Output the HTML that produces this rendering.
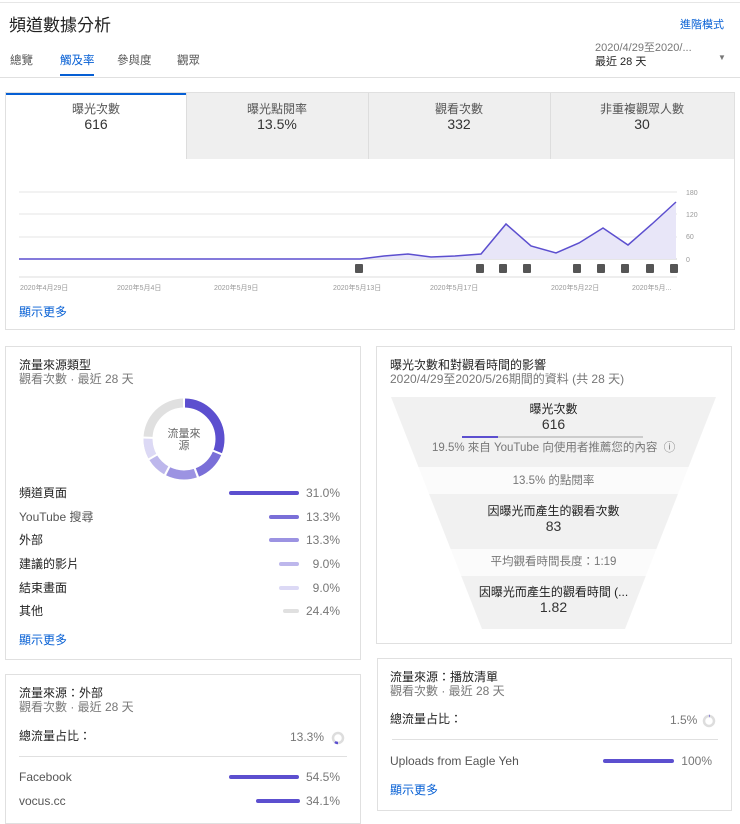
<!DOCTYPE html>
<html><head><meta charset="utf-8"><style>
*{box-sizing:border-box;margin:0;padding:0}
body{width:740px;height:814px;overflow:hidden;background:#fff;font-family:"Liberation Sans","Noto Sans CJK TC",sans-serif;color:#222;position:relative;font-size:12px;line-height:15px}
.a{position:absolute;white-space:nowrap}
.card{position:absolute;border:1px solid #e0e0e0;background:#fff}
.g{color:#777}
.blue{color:#065fd4}
.bar{position:absolute;height:4px;border-radius:2px}
.r{text-align:right}
</style></head><body>
<div class="a" style="left:0;top:2px;width:740px;height:1px;background:#e6e6e6"></div>
<div class="a" style="left:9px;top:15px;font-size:17px;line-height:22px;color:#222">頻道數據分析</div>
<div class="a blue" style="left:680px;top:18px;font-size:11px">進階模式</div>
<div class="a" style="left:10px;top:54px;font-size:11.5px;color:#555">總覽</div>
<div class="a blue" style="left:60px;top:54px;font-size:11.5px">觸及率</div>
<div class="a" style="left:60px;top:74px;width:34px;height:2px;background:#065fd4"></div>
<div class="a" style="left:117px;top:54px;font-size:11.5px;color:#555">參與度</div>
<div class="a" style="left:177px;top:54px;font-size:11.5px;color:#555">觀眾</div>
<div class="a g" style="left:595px;top:41px;font-size:11px">2020/4/29至2020/...</div>
<div class="a" style="left:595px;top:55px;font-size:11px">最近 28 天</div>
<div class="a g" style="left:718px;top:50px;font-size:8px">▼</div>
<div class="a" style="left:0;top:77px;width:740px;height:1px;background:#e0e0e0"></div>

<div class="card" style="left:5px;top:92px;width:730px;height:238px"></div>
<div class="a" style="left:6px;top:93px;width:180px;height:66px;background:#fff;border-top:2px solid #065fd4"></div>
<div class="a" style="left:186px;top:93px;width:548px;height:66px;background:#efefef"></div>
<div class="a" style="left:368px;top:93px;width:1px;height:66px;background:#ddd"></div>
<div class="a" style="left:550px;top:93px;width:1px;height:66px;background:#ddd"></div>
<div class="a" style="left:186px;top:93px;width:1px;height:66px;background:#ddd"></div>
<div class="a" style="left:6px;top:102px;width:180px;text-align:center;font-size:12px;color:#555">曝光次數<br><span style="font-size:14px;color:#333">616</span></div>
<div class="a" style="left:186px;top:102px;width:182px;text-align:center;font-size:12px;color:#555">曝光點閱率<br><span style="font-size:14px;color:#333">13.5%</span></div>
<div class="a" style="left:368px;top:102px;width:182px;text-align:center;font-size:12px;color:#555">觀看次數<br><span style="font-size:14px;color:#333">332</span></div>
<div class="a" style="left:550px;top:102px;width:184px;text-align:center;font-size:12px;color:#555">非重複觀眾人數<br><span style="font-size:14px;color:#333">30</span></div>

<svg class="a" style="left:0;top:180px" width="740" height="120">
<g stroke="#eee" stroke-width="1.5"><line x1="19" y1="12" x2="677" y2="12"/><line x1="19" y1="34" x2="677" y2="34"/><line x1="19" y1="57" x2="677" y2="57"/></g>
<line x1="19" y1="79" x2="677" y2="79" stroke="#ccc"/>
<line x1="19" y1="97" x2="677" y2="97" stroke="#ddd"/>
<polygon fill="#e8e6f8" points="19,79 360,79 384,76 408,74 431,77 455,76 481,74 506,44 531,66 556,73 579,63 603,48 628,65 652,44 676,22 676,79"/>
<polyline fill="none" stroke="#5c4fcf" stroke-width="1.5" points="19,79 360,79 384,76 408,74 431,77 455,76 481,74 506,44 531,66 556,73 579,63 603,48 628,65 652,44 676,22"/>
<g fill="#999" font-size="7" font-family="Liberation Sans"><text x="686" y="15">180</text><text x="686" y="37">120</text><text x="686" y="59">60</text><text x="686" y="82">0</text>
<text x="20" y="110">2020年4月29日</text><text x="117" y="110">2020年5月4日</text><text x="214" y="110">2020年5月9日</text><text x="333" y="110">2020年5月13日</text><text x="430" y="110">2020年5月17日</text><text x="551" y="110">2020年5月22日</text><text x="632" y="110">2020年5月...</text></g>
<g fill="#555"><rect x="355" y="84" width="8" height="9" rx="1"/><rect x="476" y="84" width="8" height="9" rx="1"/><rect x="499" y="84" width="8" height="9" rx="1"/><rect x="523" y="84" width="8" height="9" rx="1"/><rect x="573" y="84" width="8" height="9" rx="1"/><rect x="597" y="84" width="8" height="9" rx="1"/><rect x="621" y="84" width="8" height="9" rx="1"/><rect x="646" y="84" width="8" height="9" rx="1"/><rect x="670" y="84" width="8" height="9" rx="1"/></g>
</svg>
<div class="a blue" style="left:19px;top:305px;font-size:12px">顯示更多</div>

<div class="card" style="left:5px;top:346px;width:356px;height:314px"></div>
<div class="a" style="left:19px;top:358px;font-size:12px">流量來源類型</div>
<div class="a g" style="left:19px;top:372px;font-size:12px">觀看次數 · 最近 28 天</div>
<svg class="a" style="left:140px;top:395px" width="88" height="88" viewBox="-44 -44 88 88">
<g fill="none" stroke-width="9" transform="rotate(-90)">
<circle r="36" stroke="#e0e0e0"/>
<circle r="36" stroke="#5c4fcf" stroke-dasharray="68.6 157.6" stroke-dashoffset="-1"/>
<circle r="36" stroke="#7a6fd8" stroke-dasharray="28.1 198.1" stroke-dashoffset="-71.1"/>
<circle r="36" stroke="#9c93e2" stroke-dasharray="28.1 198.1" stroke-dashoffset="-101.2"/>
<circle r="36" stroke="#bdb7ec" stroke-dasharray="18.4 207.8" stroke-dashoffset="-131.3"/>
<circle r="36" stroke="#dcd9f5" stroke-dasharray="18.4 207.8" stroke-dashoffset="-151.7"/>
</g>
<g stroke="#fff" stroke-width="2"><line x1="0" y1="-31" x2="0" y2="-42"/><line x1="0" y1="-31" x2="0" y2="-42" transform="rotate(112)"/><line x1="0" y1="-31" x2="0" y2="-42" transform="rotate(160)"/><line x1="0" y1="-31" x2="0" y2="-42" transform="rotate(208)"/><line x1="0" y1="-31" x2="0" y2="-42" transform="rotate(240)"/><line x1="0" y1="-31" x2="0" y2="-42" transform="rotate(272)"/></g>
<text x="0" y="-2" text-anchor="middle" font-size="11" fill="#666" font-family="Noto Sans CJK TC">流量來</text><text x="0" y="10" text-anchor="middle" font-size="11" fill="#666" font-family="Noto Sans CJK TC">源</text>
</svg>
<div class="a" style="left:19px;top:486px;font-size:12px">頻道頁面</div><div class="bar" style="left:229px;top:491px;width:70px;background:#5c4fcf"></div><div class="a g r" style="left:300px;top:486px;width:40px">31.0%</div>
<div class="a" style="left:19px;top:510px;font-size:12px;color:#555">YouTube 搜尋</div><div class="bar" style="left:269px;top:515px;width:30px;background:#7a6fd8"></div><div class="a g r" style="left:300px;top:510px;width:40px">13.3%</div>
<div class="a" style="left:19px;top:533px;font-size:12px">外部</div><div class="bar" style="left:269px;top:538px;width:30px;background:#9c93e2"></div><div class="a g r" style="left:300px;top:533px;width:40px">13.3%</div>
<div class="a" style="left:19px;top:557px;font-size:12px">建議的影片</div><div class="bar" style="left:279px;top:562px;width:20px;background:#bdb7ec"></div><div class="a g r" style="left:300px;top:557px;width:40px">9.0%</div>
<div class="a" style="left:19px;top:581px;font-size:12px">結束畫面</div><div class="bar" style="left:279px;top:586px;width:20px;background:#dcd9f5"></div><div class="a g r" style="left:300px;top:581px;width:40px">9.0%</div>
<div class="a" style="left:19px;top:604px;font-size:12px">其他</div><div class="bar" style="left:283px;top:609px;width:16px;background:#e0e0e0"></div><div class="a g r" style="left:300px;top:604px;width:40px">24.4%</div>
<div class="a blue" style="left:19px;top:633px;font-size:12px">顯示更多</div>

<div class="card" style="left:376px;top:346px;width:356px;height:298px"></div>
<div class="a" style="left:390px;top:358px;font-size:12px">曝光次數和對觀看時間的影響</div>
<div class="a g" style="left:390px;top:372px;font-size:12px">2020/4/29至2020/5/26期間的資料 (共 28 天)</div>
<div class="a" style="left:391px;top:397px;width:325px;height:232px;clip-path:polygon(0 0,100% 0,72% 100%,28% 100%);background:linear-gradient(#f1f1f1 0,#f1f1f1 70px,#fbfbfb 70px,#fbfbfb 97px,#f1f1f1 97px,#f1f1f1 152px,#fbfbfb 152px,#fbfbfb 179px,#f1f1f1 179px)"></div>
<div class="a" style="left:391px;top:402px;width:325px;text-align:center;font-size:12px">曝光次數<br><span style="font-size:14px;color:#333">616</span></div>
<div class="a" style="left:462px;top:436px;width:181px;height:2px;background:#ccc"></div><div class="a" style="left:462px;top:436px;width:36px;height:2px;background:#5c4fcf"></div>
<div class="a g" style="left:432px;top:441px;font-size:11.5px">19.5% 來自 YouTube 向使用者推薦您的內容 &nbsp;ⓘ</div>
<div class="a g" style="left:391px;top:474px;width:325px;text-align:center;font-size:11.5px">13.5% 的點閱率</div>
<div class="a" style="left:391px;top:504px;width:325px;text-align:center;font-size:12px">因曝光而產生的觀看次數<br><span style="font-size:14px;color:#333">83</span></div>
<div class="a g" style="left:391px;top:555px;width:325px;text-align:center;font-size:11.5px">平均觀看時間長度：1:19</div>
<div class="a" style="left:391px;top:585px;width:325px;text-align:center;font-size:12px">因曝光而產生的觀看時間 (...<br><span style="font-size:14px;color:#333">1.82</span></div>

<div class="card" style="left:5px;top:674px;width:356px;height:150px"></div>
<div class="a" style="left:19px;top:686px;font-size:12px">流量來源：外部</div>
<div class="a g" style="left:19px;top:700px;font-size:12px">觀看次數 · 最近 28 天</div>
<div class="a" style="left:19px;top:729px;font-size:12px">總流量占比：</div>
<div class="a g" style="left:290px;top:730px;font-size:12px">13.3%</div>
<svg class="a" style="left:331px;top:731px" width="14" height="14"><circle cx="7" cy="7" r="5" fill="none" stroke="#ddd" stroke-width="2.5"/><path d="M7 12 A5 5 0 0 1 4 11" fill="none" stroke="#5c4fcf" stroke-width="2.5"/></svg>
<div class="a" style="left:19px;top:756px;width:328px;height:1px;background:#e0e0e0"></div>
<div class="a" style="left:19px;top:770px;font-size:12px;color:#555">Facebook</div><div class="bar" style="left:229px;top:775px;width:70px;background:#5c4fcf"></div><div class="a g r" style="left:300px;top:770px;width:40px">54.5%</div>
<div class="a" style="left:19px;top:794px;font-size:12px;color:#555">vocus.cc</div><div class="bar" style="left:256px;top:799px;width:44px;background:#5c4fcf"></div><div class="a g r" style="left:300px;top:794px;width:40px">34.1%</div>

<div class="card" style="left:377px;top:658px;width:355px;height:153px"></div>
<div class="a" style="left:390px;top:670px;font-size:12px">流量來源：播放清單</div>
<div class="a g" style="left:390px;top:684px;font-size:12px">觀看次數 · 最近 28 天</div>
<div class="a" style="left:390px;top:712px;font-size:12px">總流量占比：</div>
<div class="a g" style="left:670px;top:713px;font-size:12px">1.5%</div>
<svg class="a" style="left:702px;top:714px" width="14" height="14"><circle cx="7" cy="7" r="5" fill="none" stroke="#ddd" stroke-width="2.5"/><path d="M7 2 A5 5 0 0 1 7.6 2" fill="none" stroke="#5c4fcf" stroke-width="2.5"/></svg>
<div class="a" style="left:392px;top:739px;width:326px;height:1px;background:#e0e0e0"></div>
<div class="a" style="left:390px;top:754px;font-size:12px;color:#555">Uploads from Eagle Yeh</div><div class="bar" style="left:603px;top:759px;width:71px;background:#5c4fcf"></div><div class="a g r" style="left:672px;top:754px;width:40px">100%</div>
<div class="a blue" style="left:390px;top:783px;font-size:12px">顯示更多</div>
</body></html>
